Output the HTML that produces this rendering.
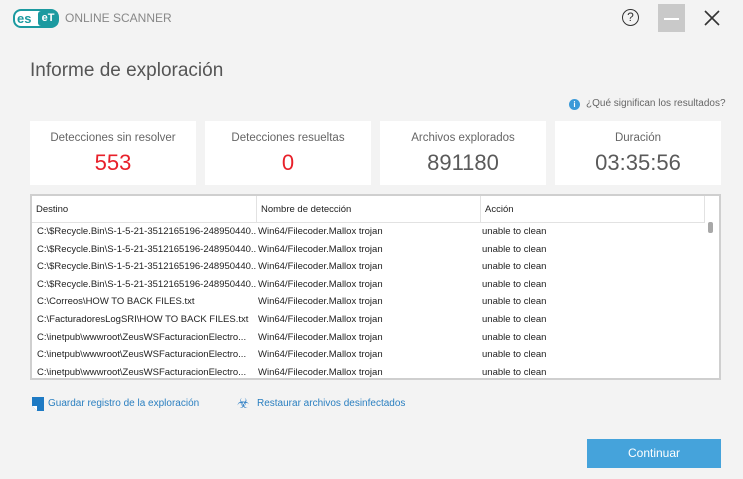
<!DOCTYPE html>
<html><head><meta charset="utf-8"><style>
*{margin:0;padding:0;box-sizing:border-box}
body{width:743px;height:479px;background:#f3f3f3;font-family:"Liberation Sans",sans-serif;position:relative;overflow:hidden;color:#333}
.abs{position:absolute}
.card{position:absolute;top:121px;width:166px;height:64px;background:#fff;text-align:center}
.card .l{font-size:11.5px;color:#666;margin-top:11px}
.card .v{font-size:22px;margin-top:6px;color:#5a5a5a}
.tbl{position:absolute;left:30px;top:194px;width:691px;height:186px;background:#fff;border:2px solid #cfcfcf}
.hdr{position:absolute;left:0;top:0;width:673px;height:27px;border-bottom:1px solid #e2e2e2;border-right:1px solid #e2e2e2;font-size:9.5px;color:#222}
.hdr div,.row div{position:absolute;top:0;white-space:nowrap;overflow:hidden}
.hdr div{line-height:27px;height:27px;padding-left:4px;border-right:1px solid #e2e2e2}
.row{position:absolute;left:0;width:673px;height:17.6px;font-size:9.5px;color:#222}
.row div{line-height:17.6px;padding-left:5px}
</style></head><body>
<div class="abs" style="left:13px;top:9px;width:46px;height:19px;border:2px solid #1b9aa0;border-radius:8px;background:#fff"></div>
<div class="abs" style="left:17px;top:12px;width:23px;height:13px;color:#1b9aa0;font-weight:bold;font-size:13px;line-height:13px">es</div>
<div class="abs" style="left:38px;top:11px;width:20px;height:15px;background:#1b9aa0;border-radius:3px;color:#fff;font-weight:bold;font-size:11px;line-height:15px;text-align:center">eT</div>
<div class="abs" style="left:65px;top:11px;font-size:12px;color:#888">ONLINE SCANNER</div>
<div class="abs" style="left:622px;top:9px;width:17px;height:17px;border:1.5px solid #333;border-radius:50%;text-align:center;font-size:12px;line-height:14px;color:#333">?</div>
<div class="abs" style="left:658px;top:4px;width:27px;height:28px;background:#c9c9c9"></div>
<div class="abs" style="left:664px;top:18px;width:15px;height:1.5px;background:#fff"></div>
<svg class="abs" style="left:704px;top:10px" width="16" height="16"><path d="M1 1L15 15M15 1L1 15" stroke="#333" stroke-width="1.6"/></svg>
<div class="abs" style="left:30px;top:60px;font-size:19px;color:#555">Informe de exploración</div>
<div class="abs" style="left:569px;top:99px;width:11px;height:11px;border-radius:50%;background:#3c9ad8;color:#fff;font-size:8px;font-weight:bold;text-align:center;line-height:11px">i</div>
<div class="abs" style="left:586px;top:98px;font-size:10px;color:#666">¿Qué significan los resultados?</div>
<div class="card" style="left:30px"><div class="l">Detecciones sin resolver</div><div class="v" style="color:#e8202a">553</div></div>
<div class="card" style="left:205px"><div class="l">Detecciones resueltas</div><div class="v" style="color:#e8202a">0</div></div>
<div class="card" style="left:380px"><div class="l">Archivos explorados</div><div class="v">891180</div></div>
<div class="card" style="left:555px"><div class="l">Duración</div><div class="v">03:35:56</div></div>
<div class="tbl">
<div class="hdr"><div style="left:0;width:225px">Destino</div><div style="left:225px;width:224px">Nombre de detección</div><div style="left:449px;width:224px">Acción</div></div>
<div class="abs" style="left:676px;top:26px;width:5px;height:11px;background:#a8a8a8;border-radius:2px"></div>
<div class="row" style="top:27px"><div style="left:0;width:225px">C:\$Recycle.Bin\S-1-5-21-3512165196-248950440...</div><div style="left:221px">Win64/Filecoder.Mallox trojan</div><div style="left:445px">unable to clean</div></div>
<div class="row" style="top:44.6px"><div style="left:0;width:225px">C:\$Recycle.Bin\S-1-5-21-3512165196-248950440...</div><div style="left:221px">Win64/Filecoder.Mallox trojan</div><div style="left:445px">unable to clean</div></div>
<div class="row" style="top:62.2px"><div style="left:0;width:225px">C:\$Recycle.Bin\S-1-5-21-3512165196-248950440...</div><div style="left:221px">Win64/Filecoder.Mallox trojan</div><div style="left:445px">unable to clean</div></div>
<div class="row" style="top:79.8px"><div style="left:0;width:225px">C:\$Recycle.Bin\S-1-5-21-3512165196-248950440...</div><div style="left:221px">Win64/Filecoder.Mallox trojan</div><div style="left:445px">unable to clean</div></div>
<div class="row" style="top:97.4px"><div style="left:0;width:225px">C:\Correos\HOW TO BACK FILES.txt</div><div style="left:221px">Win64/Filecoder.Mallox trojan</div><div style="left:445px">unable to clean</div></div>
<div class="row" style="top:115px"><div style="left:0;width:225px">C:\FacturadoresLogSRI\HOW TO BACK FILES.txt</div><div style="left:221px">Win64/Filecoder.Mallox trojan</div><div style="left:445px">unable to clean</div></div>
<div class="row" style="top:132.6px"><div style="left:0;width:225px">C:\inetpub\wwwroot\ZeusWSFacturacionElectro...</div><div style="left:221px">Win64/Filecoder.Mallox trojan</div><div style="left:445px">unable to clean</div></div>
<div class="row" style="top:150.2px"><div style="left:0;width:225px">C:\inetpub\wwwroot\ZeusWSFacturacionElectro...</div><div style="left:221px">Win64/Filecoder.Mallox trojan</div><div style="left:445px">unable to clean</div></div>
<div class="row" style="top:167.8px"><div style="left:0;width:225px">C:\inetpub\wwwroot\ZeusWSFacturacionElectro...</div><div style="left:221px">Win64/Filecoder.Mallox trojan</div><div style="left:445px">unable to clean</div></div>
</div>
<svg class="abs" style="left:32px;top:397px" width="12" height="14"><path d="M0 0H12V14H5L0 9Z" fill="#1e7ac4"/><path d="M0 9H5V14Z" fill="#fff"/></svg>
<div class="abs" style="left:48px;top:398px;font-size:10px;color:#2a7fc0">Guardar registro de la exploración</div>
<div class="abs" style="left:237px;top:395px;font-size:14px;color:#3a86c8">☣</div>
<div class="abs" style="left:257px;top:398px;font-size:10px;color:#2a7fc0">Restaurar archivos desinfectados</div>
<div class="abs" style="left:587px;top:439px;width:134px;height:29px;background:#45a3db;color:#fff;font-size:12px;text-align:center;line-height:29px">Continuar</div>
</body></html>
